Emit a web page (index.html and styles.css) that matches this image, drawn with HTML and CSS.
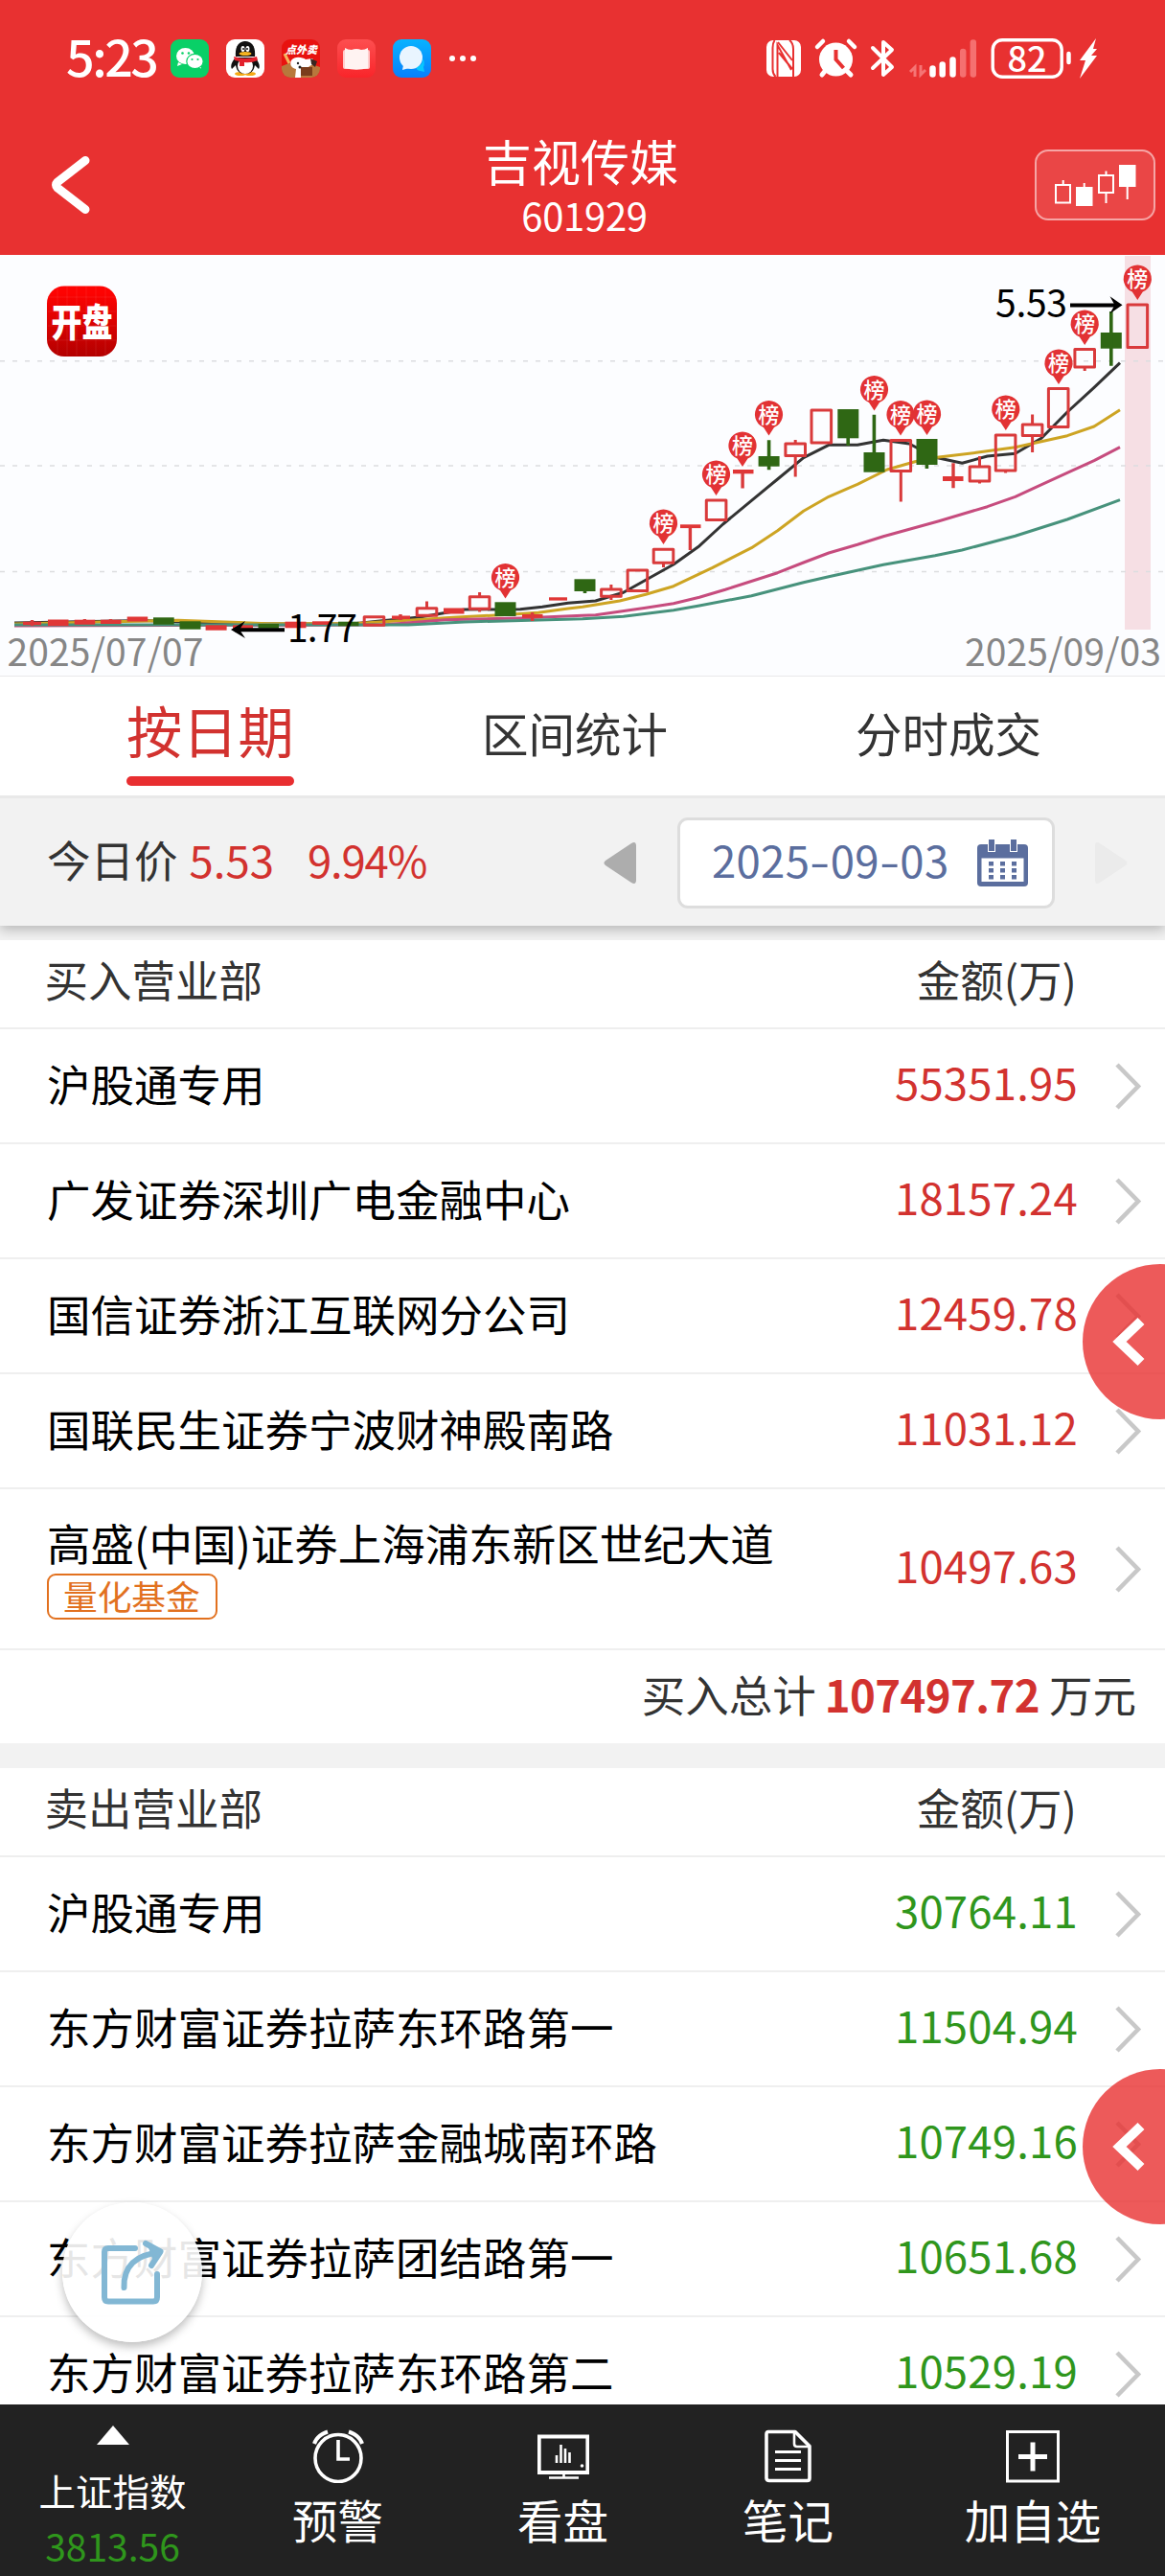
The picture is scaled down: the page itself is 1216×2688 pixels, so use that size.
FILE: index.html
```html
<!DOCTYPE html>
<html lang="zh-CN">
<head>
<meta charset="utf-8">
<title>吉视传媒 601929</title>
<link rel="stylesheet" href="styles.css">
</head>
<body>
<div class="screen">
  <header class="header">
    <div class="status">
      <span class="clock">5:23</span>
      <div class="apps">
        <svg width="40" height="40" viewBox="0 0 40 40"><rect width="40" height="40" rx="9" fill="#09d067"/><path d="M8 24l-1 4 5-2z" fill="#fff"/><ellipse cx="15.500" cy="17.500" rx="9.500" ry="8.500" fill="#fff"/><path d="M31 26l1 4.500-5-2z" fill="#fff"/><ellipse cx="25.500" cy="23" rx="8.700" ry="7.600" fill="#fff" stroke="#09d067" stroke-width="1.200"/><g fill="#09d067"><circle cx="12.500" cy="14.500" r="1.300"/><circle cx="19" cy="14.500" r="1.300"/><circle cx="22.500" cy="21" r="1.100"/><circle cx="28.500" cy="21" r="1.100"/></g></svg>
        <svg width="40" height="40" viewBox="0 0 40 40"><rect width="40" height="40" rx="9" fill="#fff"/><ellipse cx="15" cy="36" rx="6" ry="2" fill="#f5a914"/><ellipse cx="25" cy="36" rx="6" ry="2" fill="#f5a914"/><path d="M10 19c-4 4-6 9-4 12l4-4c1 6 4 9 10 9s9-3 10-9l4 4c2-3 0-8-4-12z" fill="#111"/><ellipse cx="20" cy="28" rx="8" ry="8" fill="#fff"/><path d="M10 18C9 8 13 2 20 2s11 6 10 16z" fill="#111"/><ellipse cx="17.500" cy="10" rx="2" ry="3" fill="#fff"/><ellipse cx="22.500" cy="10" rx="2" ry="3" fill="#fff"/><circle cx="18" cy="10" r="1" fill="#111"/><circle cx="22" cy="10" r="1" fill="#111"/><ellipse cx="20" cy="15" rx="6.500" ry="2" fill="#f5b320"/><path d="M8 18q12 4 24 0l1 4q-7 3-14 2v4h-5v-5l-5-1z" fill="#e3202c"/></svg>
        <svg width="40" height="40" viewBox="0 0 40 40"><defs><clipPath id="shopClip"><rect width="40" height="40" rx="9"/></clipPath></defs><g clip-path="url(#shopClip)"><rect width="40" height="40" fill="#e8120f"/><path d="M0 40V28l8-3 9 5 12-5 11 4v11z" fill="#b8783c"/><path d="M3 15l5 10" stroke="#f5b45c" stroke-width="3"/><path d="M10 22c4-5 12-3 15-1l7-1 3 5-6 3-4 5h-5v7h-6l1-9c-5-1-7-5-5-9z" fill="#fff"/><path d="M30 20l7 3-2 6-4-3z" fill="#3a2620"/><path d="M20 29h12v9H20z" fill="#7a3d1c"/><circle cx="17" cy="25" r="1.200" fill="#222"/><circle cx="19" cy="29" r="1.500" fill="#222"/></g><text x="4" y="14.500" class="shop-text">点外卖</text></svg>
        <svg width="40" height="40" viewBox="0 0 40 40"><defs><linearGradient id="bookBg" x2="0" y2="1"><stop stop-color="#fd4f50"/><stop offset="1" stop-color="#f9252a"/></linearGradient></defs><rect width="40" height="40" rx="9" fill="url(#bookBg)"/><rect x="6" y="11" width="28" height="20" rx="2" fill="#fcc"/><path d="M8 9q3 2 7 2 5-2 10 0 4 0 7-2v21q-12 3.500-24 0z" fill="#fff3f2"/></svg>
        <svg width="40" height="40" viewBox="0 0 40 40"><defs><linearGradient id="chatBg" x2="0" y2="1"><stop stop-color="#08b3ff"/><stop offset="1" stop-color="#087ffb"/></linearGradient></defs><rect width="40" height="40" rx="9" fill="url(#chatBg)"/><path d="M24 29q8-1 7-9 3 4 1 9l1 5-4-1q-4 0-5-4z" fill="#08c8ff"/><circle cx="19" cy="19" r="12" fill="#e9f5ff"/><path d="M11 27l-1 5 7-2z" fill="#e9f5ff"/></svg>
        <svg class="dots" width="30" height="8" viewBox="0 0 30 8" fill="#fff"><circle cx="4" cy="4" r="3"/><circle cx="15" cy="4" r="3"/><circle cx="26" cy="4" r="3"/></svg>
      </div>
      <svg class="signals" width="348" height="60" viewBox="799 31 348 60">
        <rect x="800" y="42" width="36" height="38" rx="7" fill="#fff"/><path d="M809.500 80V45l17 31M817 43l0 0M812 43l15 28M826.500 80V78M829.500 42v33M813 56l13 13M813 62l13 14" fill="none" stroke="#e83131" stroke-width="0"/><path d="M808.500 42q-2 3-2 8v22q0 5 3 8M811.500 80V47l14.500 26M828 80V51M824 42q4 3 4 9M812 44l15 19M813 55l14 17" fill="none" stroke="#e83131" stroke-width="2"/>
        <circle cx="872.500" cy="62" r="17.500" fill="#fff"/><path d="M853 49l6-6M892 49l-6-6" stroke="#fff" stroke-width="4.500" stroke-linecap="round"/><path d="M862 73l-4 5M883 73l5 5" stroke="#fff" stroke-width="5" stroke-linecap="round"/><path d="M872.500 52v10l8 9" fill="none" stroke="#e83131" stroke-width="4"/>
        <path d="M911 50l20 20-9 8V44l9 8-20 19" fill="none" stroke="#fff" stroke-width="4" stroke-linejoin="round" stroke-linecap="round"/>
        <path d="M955 80V70l-5 5M961 68v10l5-5" fill="none" stroke="#f57575" stroke-width="3"/>
        <g stroke-width="6.500" stroke-linecap="round"><path d="M973.500 71.500v6M983.700 67.500v10M994.500 62.500v15" stroke="#fff"/><path d="M1005.200 54v23.500M1015.800 44.500v33" stroke="#f57070"/></g>
        <rect x="1036.200" y="41.700" width="72" height="38.600" rx="10" fill="none" stroke="#fff" stroke-width="3.400"/><path d="M1115.500 56v9" stroke="#fff" stroke-width="4.500" stroke-linecap="round"/>
        <text x="1051.500" y="74.500" class="battery-text" textLength="41">82</text>
        <path d="M1144 40l-17 23h6l-6 19 18-24h-6l6-7h-4z" fill="#fff"/>
      </svg>
    </div>
    <div class="titlebar">
      <svg class="back" width="46" height="64" viewBox="0 0 46 64"><path d="M38 6.500L9 29q-3 3 0 6l29 22.500" fill="none" stroke="#fff" stroke-width="9" stroke-linecap="round" stroke-linejoin="round"/></svg>
      <div class="titles"><h1 class="stock-name">吉视传媒</h1><div class="stock-code">601929</div></div>
      <div class="kline-button">
        <svg width="86" height="44" viewBox="1100 170 86 44"><g fill="none" stroke="#fff" stroke-width="2"><path d="M1102 192h15v18.500h-15zM1109.700 192v-5M1147 182h15v18h-15zM1154.500 182v-4.500M1154.500 200v11"/><path d="M1131.700 190v5M1176.700 193v14" /></g><path d="M1123 194h17.500v20H1123zM1168 171h17.500v23H1168z" fill="#fff"/></svg>
      </div>
    </div>
  </header>

  <section class="chart">
    <svg width="1216" height="440" viewBox="0 266 1216 440">
      <defs>
        <symbol id="pin" viewBox="-16 -16 32 40" overflow="visible"><path d="M0 22L-5.500 13.500A14.600 14.600 0 1 1 5.500 13.500Z" fill="#e23234"/><text x="-11" y="8" class="pin-text">榜</text></symbol>
        <linearGradient id="openBg" x2="0" y2="1"><stop offset=".1" stop-color="#fd0302"/><stop offset="1" stop-color="#b30000"/></linearGradient>
      </defs>
      <rect x="1174" y="267" width="27" height="390" fill="#f6dfe4"/>
      <path class="grid" d="M0 376.700H1216M0 486H1216M0 596.500H1216"/>
      <g class="ma">
        <path stroke="#333" d="M15 650L150 647.500 240 651 368 651 399 647.700 438 644 485 636 543 635.700 566 633.300 593 629.300 621.600 627 650.700 618.300 703 589 730 569.700 754.600 547 784.400 522.300 811.600 500 838.700 477.700 865 464.300H895L922 459.300 949 463 976.400 477.300 1004.300 483.300 1030.600 476 1059.700 473.300 1087 457.300 1114 430 1142 404.300 1169 378.700"/>
        <path stroke="#cda423" d="M15 651L186 647.300 279 650.700 368 650.700 426 647.300 477 644 523 641.700 562 639.300 593 635 608 633.300 646.800 627 674 620.300 703 611.700 743.700 592.300 784.400 571.700 811.600 553.700 838.700 533.300 865 518.300 895 505.300 926 490 955 481.700 980 477 1019 472.300 1059.700 466.700 1114 454.700 1142 445 1169 427.700"/>
        <path stroke="#c64c7e" d="M15 653L400 652 465 646.700 543 645 608 642.300 621.600 641.700 674 634.300 703 629.700 730 623.300 757 615.300 811.600 597.700 838.700 587 865 577 895 568.300 922 559.700 980 543.700 1030.600 528.700 1059.700 518.300 1114 493.300 1142 480.700 1169 466.700"/>
        <path stroke="#47927c" d="M15 652L426 652 485 649 608 645.700 650.700 643.300 703 636.700 730 632 784.400 621.700 838.700 607.700 865 601.700 922 589.300 976 579.700 1004 574 1059.700 559.300 1114 542 1169 521.700"/>
      </g>
      <g class="up-solid">
        <rect x="24" y="648.700" width="19" height="3.500"/><rect x="50" y="646.500" width="21.500" height="6.500"/><rect x="77.700" y="646.700" width="21.500" height="5"/><rect x="105" y="646.700" width="21.500" height="4.300"/><rect x="132.700" y="643.500" width="21.500" height="5"/><rect x="214.600" y="652.300" width="22" height="5.400"/><rect x="243" y="652.300" width="21" height="4.300"/><rect x="297.500" y="648.700" width="22" height="6.600"/><rect x="326" y="648.300" width="20" height="3.600"/><rect x="409" y="642.500" width="19" height="3.600"/><rect x="463" y="634.500" width="21.500" height="6"/><rect x="545" y="641" width="21.500" height="3.800"/><rect x="573" y="623.300" width="19" height="3.300"/><rect x="710" y="547.300" width="21.500" height="3.800"/><rect x="765" y="490" width="21.500" height="4.300"/><rect x="984" y="497" width="21.500" height="5"/>
        <path d="M33.500 647v6M88.400 646v3M115.500 646v3M418 641v6M555.600 639v9M720.400 549v25M775.100 492v17.500M995 483.300v26" stroke="#d93a3b" stroke-width="3.400"/>
      </g>
      <g class="down">
        <rect x="160" y="644.300" width="21.700" height="7.400"/><rect x="187.500" y="648.300" width="22" height="8.400"/><rect x="269.500" y="651" width="21.500" height="4.700"/><rect x="353" y="648.700" width="21.500" height="4.500"/><rect x="516.500" y="628.300" width="22" height="14.700"/><rect x="599.500" y="604.300" width="22" height="12.700"/><rect x="791.600" y="476" width="22" height="10.700"/><rect x="874.300" y="427" width="22" height="30.300"/><rect x="901.500" y="472" width="22" height="20.700"/><rect x="956.500" y="458" width="22" height="27"/><rect x="1148.800" y="347" width="22" height="16.700"/>
        <path d="M610.500 615v4M802.600 459.300v31M885.200 455v10M912.400 432.700V475M967.400 483v6M1159.800 325v56.700"/>
      </g>
      <g class="up">
        <rect x="380.200" y="643.700" width="20.600" height="8.600"/><rect x="435.200" y="634.700" width="20.600" height="7.600"/><rect x="490.300" y="622.700" width="20.600" height="12.600"/><rect x="627.600" y="615" width="20.600" height="7.300"/><rect x="655.100" y="595" width="20.600" height="21.500"/><rect x="682.200" y="573.200" width="20.600" height="14"/><rect x="737.300" y="522" width="20.600" height="20.500"/><rect x="819.900" y="463" width="20.600" height="12.600"/><rect x="847" y="428" width="20.600" height="34"/><rect x="930" y="459.500" width="20.600" height="32"/><rect x="1012.200" y="487" width="20.600" height="15"/><rect x="1039.300" y="454" width="20.600" height="37"/><rect x="1067.300" y="443" width="20.600" height="11.500"/><rect x="1094.400" y="405.500" width="20.600" height="40"/><rect x="1121.900" y="364.500" width="20.600" height="18.500"/><rect x="1177" y="318" width="20.600" height="44.500"/>
        <path d="M445.500 634v-6.500M500.600 622v-4M500.600 636v2.500M637.900 614v-4M637.900 623v3M692.500 588v4M830.200 462v-3M830.200 477v20.500M940.300 492v31.500M1022.500 486v-10M1022.500 502v2.500M1049.600 491v2.500M1077.600 442v-9.500M1077.600 455v17M1132.200 383v4"/>
      </g>
      <g class="pins">
        <use href="#pin" x="511.500" y="586.500" width="32" height="40"/><use href="#pin" x="676.500" y="530" width="32" height="40"/><use href="#pin" x="731.500" y="479" width="32" height="40"/><use href="#pin" x="759" y="449" width="32" height="40"/><use href="#pin" x="786.500" y="416.500" width="32" height="40"/><use href="#pin" x="896.500" y="390.500" width="32" height="40"/><use href="#pin" x="924" y="416.500" width="32" height="40"/><use href="#pin" x="951.500" y="416" width="32" height="40"/><use href="#pin" x="1033.800" y="411" width="32" height="40"/><use href="#pin" x="1089" y="363" width="32" height="40"/><use href="#pin" x="1116.200" y="322" width="32" height="40"/><use href="#pin" x="1171.300" y="275" width="32" height="40"/>
      </g>
      <path class="arrow" d="M297 657.300H245M1117 318.500H1167"/>
      <path d="M241 657l15-9-6 9 6 9zM1171.500 318.300l-13-9 5 9-5 9z"/>
      <text class="price-mark" x="300" y="669.500" textLength="73">1.77</text>
      <text class="price-mark" x="1039" y="330.500" textLength="75">5.53</text>
      <text class="date-mark" x="7.500" y="695" textLength="205">2025/07/07</text>
      <text class="date-mark" x="1007" y="695" textLength="205">2025/09/03</text>
      <rect x="49" y="298.500" width="73" height="73.500" rx="18" fill="url(#openBg)"/>
      <path d="M60 300v70M70 299v72M80 299v72M90 299v72M100 299v72M110 300v70M50 310h71M50 325h71M50 340h71M50 355h71" stroke="#fff" stroke-opacity=".08"/>
      <text class="open-mark" transform="translate(53.500 351) scale(1 1.240)">开盘</text>
    </svg>
  </section>

  <nav class="tabs">
    <span class="tab active">按日期</span><span class="tab">区间统计</span><span class="tab">分时成交</span>
  </nav>

  <section class="pricebar">
    <div class="quote"><span>今日价</span><span class="red price">5.53</span><span class="red change">9.94%</span></div>
    <svg class="prev" width="34" height="43" viewBox="0 0 34 43"><path d="M34 4v35q0 6-5 3L2 24q-3-2.500 0-5L29 1q5-3 5 3z" fill="#adadad"/></svg>
    <div class="datebox"><span class="date">2025<i>-</i>09<i>-</i>03</span>
      <svg width="53" height="49" viewBox="0 0 53 49"><rect y="5" width="53" height="44" rx="4" fill="#5b6e9e"/><path d="M4.500 19.500h44v24.500h-44z" fill="#fff"/><path d="M11 0h8v13h-8zM34 0h8v13h-8z" fill="#fff"/><path d="M12 0h6v12h-6zM35 0h6v12h-6zM12 23h5v4.500h-5zM24 23h5v4.500h-5zM36 23h5v4.500h-5zM12 30h5v4.500h-5zM24 30h5v4.500h-5zM36 30h5v4.500h-5zM12 37h5v4.500h-5zM24 37h5v4.500h-5zM36 37h5v4.500h-5z" fill="#5b6e9e"/></svg>
    </div>
    <svg class="next" width="34" height="43" viewBox="0 0 34 43"><path d="M0 4v35q0 6 5 3l27-18q3-2.500 0-5L5 1Q0-2 0 4z" fill="#ebebeb"/></svg>
  </section>

  <section class="list">
    <div class="list-head"><span>买入营业部</span><span>金额(万)</span></div>
    <div class="row"><span class="name">沪股通专用</span><span class="amount red">55351.95</span><svg class="chev" viewBox="0 0 28 49"><path d="M2 2l22 22.500L2 47"/></svg></div>
    <div class="row"><span class="name">广发证券深圳广电金融中心</span><span class="amount red">18157.24</span><svg class="chev" viewBox="0 0 28 49"><path d="M2 2l22 22.500L2 47"/></svg></div>
    <div class="row"><span class="name">国信证券浙江互联网分公司</span><span class="amount red">12459.78</span><svg class="chev" viewBox="0 0 28 49"><path d="M2 2l22 22.500L2 47"/></svg></div>
    <div class="row"><span class="name">国联民生证券宁波财神殿南路</span><span class="amount red">11031.12</span><svg class="chev" viewBox="0 0 28 49"><path d="M2 2l22 22.500L2 47"/></svg></div>
    <div class="row tall"><span class="name">高盛(中国)证券上海浦东新区世纪大道<span class="tag">量化基金</span></span><span class="amount red">10497.63</span><svg class="chev" viewBox="0 0 28 49"><path d="M2 2l22 22.500L2 47"/></svg></div>
    <div class="total"><span>买入总计</span><b class="red">107497.72</b><span>万元</span></div>
  </section>

  <section class="list sell">
    <div class="list-head"><span>卖出营业部</span><span>金额(万)</span></div>
    <div class="row"><span class="name">沪股通专用</span><span class="amount green">30764.11</span><svg class="chev" viewBox="0 0 28 49"><path d="M2 2l22 22.500L2 47"/></svg></div>
    <div class="row"><span class="name">东方财富证券拉萨东环路第一</span><span class="amount green">11504.94</span><svg class="chev" viewBox="0 0 28 49"><path d="M2 2l22 22.500L2 47"/></svg></div>
    <div class="row"><span class="name">东方财富证券拉萨金融城南环路</span><span class="amount green">10749.16</span><svg class="chev" viewBox="0 0 28 49"><path d="M2 2l22 22.500L2 47"/></svg></div>
    <div class="row"><span class="name">东方财富证券拉萨团结路第一</span><span class="amount green">10651.68</span><svg class="chev" viewBox="0 0 28 49"><path d="M2 2l22 22.500L2 47"/></svg></div>
    <div class="row"><span class="name">东方财富证券拉萨东环路第二</span><span class="amount green">10529.19</span><svg class="chev" viewBox="0 0 28 49"><path d="M2 2l22 22.500L2 47"/></svg></div>
  </section>

  <div class="drawer drawer-top"><svg width="86" height="162" viewBox="0 0 86 162"><path d="M61 59.500L38.500 81 61 102.500" fill="none" stroke="#fff" stroke-width="10"/></svg></div>
  <div class="drawer drawer-bottom"><svg width="86" height="162" viewBox="0 0 86 162"><path d="M61 59.500L38.500 81 61 102.500" fill="none" stroke="#fff" stroke-width="10"/></svg></div>
  <div class="share">
    <svg width="68" height="70" viewBox="104 2336 68 70"><g fill="none" stroke="#82b7d4" stroke-width="6" stroke-linecap="round" stroke-linejoin="round"><path d="M141 2346h-28q-4 0-4 4v47q0 4.500 4 4.500h47q4 0 4-4.500v-24"/><path d="M129.500 2387c-1-22 13-35 36-36M152 2341l15.500 8.500-9.500 14.500"/></g><path d="M153 2341l16 9-9 13-2-10z" fill="#82b7d4"/></svg>
  </div>

  <footer class="nav">
    <div class="nav-item index"><svg width="34" height="20" viewBox="0 0 34 20"><path d="M17 0l17 20H0z" fill="#fff"/></svg><span class="index-name">上证指数</span><span class="index-value">3813.56</span></div>
    <div class="nav-item"><svg width="54" height="56" viewBox="0 0 54 56" fill="none" stroke="#fff"><ellipse cx="27" cy="30" rx="24" ry="24.500" stroke-width="3.600"/><path d="M27 11v20h12" stroke-width="3.600"/><path d="M2 15Q5 6 16 2.500M52 15Q49 6 38 2.500" stroke-width="4"/></svg><span>预警</span></div>
    <div class="nav-item"><svg width="54" height="56" viewBox="0 0 54 56" fill="none" stroke="#fff"><path d="M1.800 7.500h50.500v37.500H1.800z" stroke-width="3.800"/><path d="M12 50.500h31M27.500 46v4M20 27v8M24.500 16v19M29 20v15M33.500 24v11" stroke-width="2.600"/><circle cx="46.500" cy="38" r="1.800" fill="#fff" stroke="none"/></svg><span>看盘</span></div>
    <div class="nav-item"><svg width="54" height="56" viewBox="0 0 54 56" fill="none" stroke="#fff" stroke-linejoin="round"><path d="M6 2.500h28l15 15V51q0 2.500-2.500 2.500H7Q4 53.500 4 51V5q0-2.500 2-2.500z" stroke-width="3.600"/><path d="M33 4v11q0 3 3 3h12" stroke-width="2.600"/><path d="M13 23.500h27M13 32.500h27M13 41.500h27" stroke-width="3"/></svg><span>笔记</span></div>
    <div class="nav-item"><svg width="56" height="56" viewBox="0 0 56 56" fill="none" stroke="#fff"><path d="M1.500 2.500h53v51.500h-53z" stroke-width="3"/><path d="M13 28.500h30M28 13.500v30" stroke-width="5"/></svg><span>加自选</span></div>
  </footer>
</div>
</body>
</html>
```
FILE: styles.css
```css
* { box-sizing: border-box; }
body {
  margin: 0;
  font-family: "Noto Sans CJK SC", sans-serif;
  font-size: 45.5px;
  line-height: 1;
  color: #333;
}
svg { display: block; flex: none; }
.screen { position: relative; width: 1216px; height: 2688px; overflow: hidden; background: #fff; display: flex; flex-direction: column; }
.red { color: #d2322f; }
.green { color: #2f961c; }

/* header */
.header { flex: none; height: 266px; background: #e83131; color: #fff; }
.status { height: 122px; padding: 0 69px; display: flex; align-items: center; }
.clock { width: 109px; font-size: 52px; font-weight: 500; letter-spacing: -2.5px; padding-bottom: 6px; }
.apps { display: flex; align-items: center; gap: 18px; flex: 1; }
.shop-text { font-size: 11px; font-weight: 900; font-style: italic; fill: #fff; }
.battery-text { font-size: 36px; font-weight: 500; fill: #fff; }
.titlebar { height: 144px; padding: 0 10px 0 51px; display: flex; align-items: center; }
.back { margin-bottom: 2px; }
.titles { flex: 1; display: flex; flex-direction: column; align-items: center; margin-left: 35px; }
.stock-name { margin: 0; font-size: 51px; font-weight: 400; line-height: 60px; }
.stock-code { font-size: 40px; line-height: 56px; padding-left: 8px; letter-spacing: -.3px; margin-top: -1px; }
.kline-button { width: 126px; height: 74px; margin-bottom: 2px; border: 2px solid #f6a5a5; border-radius: 14px; background: #ea4646; display: flex; align-items: center; justify-content: center; }

/* chart */
.chart { flex: none; height: 440px; background: #fcfdff; border-bottom: 1px solid #e8e8ea; }
.grid { fill: none; stroke: #dcdde0; stroke-width: 1.5; stroke-dasharray: 5 8; }
.ma { fill: none; stroke-width: 3; stroke-linejoin: round; }
.up-solid { fill: #e03636; }
.down { fill: #2f6714; }
.down path { stroke: #2f6714; stroke-width: 3.6; fill: none; }
.up { fill: none; stroke: #d93a3b; stroke-width: 3; stroke-linejoin: round; }
.arrow { stroke: #000; stroke-width: 4; }
.pin-text { font-size: 22px; font-weight: 500; fill: #fff; }
.price-mark { font-size: 39px; fill: #000; }
.date-mark { font-size: 39px; fill: #868686; }
.open-mark { font-size: 32px; font-weight: 900; fill: #fff; }

/* tabs */
.tabs { flex: none; height: 124px; padding-left: 132px; display: flex; gap: 196px; font-size: 48.5px; }
.tab { height: 100%; padding-top: 34px; }
.tab.active { font-size: 58.3px; color: #d2322f; padding-top: 26px; }
.tab.active::after { content: ""; display: block; height: 10px; margin-top: 20px; border-radius: 5px; background: #e82e30; }

/* price bar */
.pricebar { position: relative; flex: none; height: 136px; padding: 2px 39px 0 49px; background: #f2f2f2; border-top: 3px solid #e9e9e9; display: flex; align-items: center; box-shadow: 0 4px 12px rgba(0,0,0,.25); clip-path: inset(0 0 -15px 0); }
.quote { width: 581px; display: flex; padding-bottom: 7px; }
.price { margin-left: 12px; }
.change { margin-left: 35px; letter-spacing: -1.2px; }
.datebox { width: 394px; height: 95px; margin-left: 43px; padding: 0 25px 0 33px; border: 3px solid #ddd; border-radius: 11px; background: #fff; display: flex; align-items: center; justify-content: space-between; }
.date { display: flex; color: #5b6e9e; letter-spacing: .3px; padding-bottom: 7px; }
.date i { width: 21.5px; text-align: center; font-style: normal; transform: scaleX(1.35); }
.next { margin-left: 42px; }

/* broker lists */
.list { flex: none; border-top: 15px solid #f2f2f2; }
.sell { border-top-width: 26px; }
.list-head { height: 93px; padding: 0 92px 10px 46.5px; border-bottom: 2px solid #eee; display: flex; align-items: center; justify-content: space-between; }
.row { height: 120px; padding: 0 24px 0 49px; border-bottom: 2px solid #efefef; display: flex; align-items: center; }
.name { flex: 1; color: #000; padding-bottom: 4px; }
.amount { padding-bottom: 9px; letter-spacing: .2px; }
.chev { width: 28px; height: 49px; margin-left: 39px; fill: none; stroke: #c8c8c8; stroke-width: 4.6; }
.row.tall { height: 168px; }
.tall .name { display: flex; flex-direction: column; align-items: flex-start; padding: 3px 0 0; }
.tag { height: 48px; margin-top: 9px; padding: 3px 15px 0; width: 178px; border: 2.5px solid #e2711f; border-radius: 9px; color: #e2711f; font-size: 35.7px; }
.total { height: 97px; padding: 0 30px 6px 0; display: flex; align-items: center; justify-content: flex-end; }
.total b { margin: 0 10px 0 9px; letter-spacing: -.6px; }

/* floating buttons */
.drawer { position: absolute; left: 1130px; width: 162px; height: 162px; border-radius: 50%; background: rgba(232,49,49,.8); }
.drawer-top { top: 1319px; }
.drawer-bottom { top: 2159px; }
.share { position: absolute; left: 65px; top: 2298px; width: 146px; height: 146px; border-radius: 50%; background: rgba(255,255,255,.9); box-shadow: 0 5px 10px rgba(0,0,0,.25); display: flex; align-items: center; justify-content: center; }

/* bottom bar */
.nav { position: absolute; left: 0; bottom: 0; width: 1216px; height: 179px; background: #222; color: #fff; display: grid; grid-template-columns: repeat(4, 235px) 276px; font-size: 47.5px; }
.nav-item { display: flex; flex-direction: column; align-items: center; padding-top: 26px; gap: 14px; }
.index { padding-top: 22px; gap: 0; }
.index-name { font-size: 38.5px; margin-top: 28px; }
.index-value { font-size: 39px; color: #2f961c; margin-top: 19px; }
```
